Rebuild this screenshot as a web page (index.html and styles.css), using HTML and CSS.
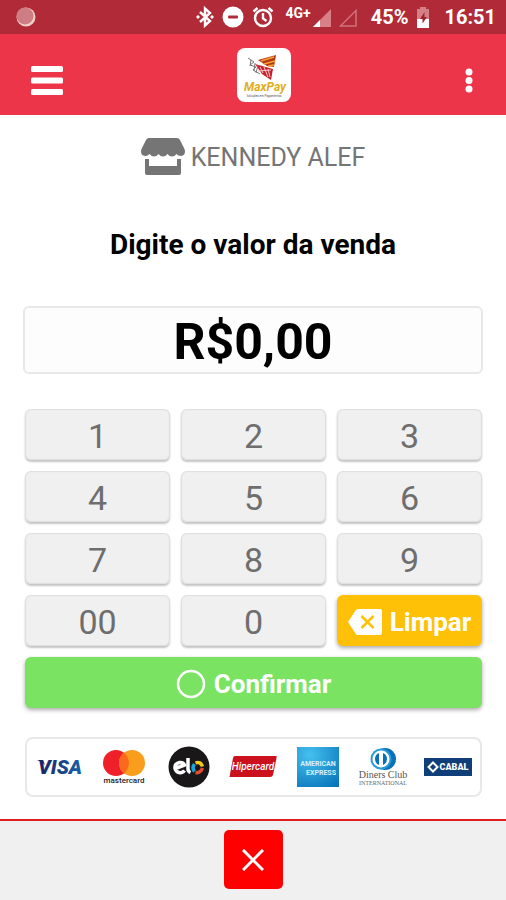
FILE: index.html
```html
<!DOCTYPE html>
<html lang="pt-BR">
<head>
  <meta charset="UTF-8">
  <meta name="viewport" content="width=device-width, initial-scale=1.0">
  <title>MaxPay</title>
  <link rel="stylesheet" href="styles.css">
</head>
<body>

  <!-- Status bar -->
  <div class="status-bar">
    <svg class="status-dot" width="20" height="20" viewBox="0 0 20 20">
      <circle cx="10" cy="10" r="9.5" fill="#f0cfc8"/>
      <circle cx="9" cy="9" r="8.5" fill="#cf7d85"/>
    </svg>
    <div class="status-icons">
      <svg width="18" height="22" viewBox="0 0 18 22" fill="none" stroke="#fff" stroke-width="2.4">
        <path d="M4 6l10 9-5 4.500V2.500L14 7l-10 9"/>
        <circle cx="2" cy="11" r="1.2" fill="#fff" stroke-width="1"/>
        <circle cx="16" cy="11" r="1.2" fill="#fff" stroke-width="1"/>
      </svg>
      <svg width="22" height="22" viewBox="0 0 22 22">
        <circle cx="11" cy="11" r="10.500" fill="#fff"/>
        <rect x="6" y="9.500" width="10" height="3" rx="1" fill="#b02a37"/>
      </svg>
      <svg width="22" height="22" viewBox="0 0 22 22" fill="none" stroke="#fff" stroke-width="2.4">
        <circle cx="11" cy="12" r="8"/>
        <path d="M11 7v5.500l3.500 2.500M1.500 5.500l4-3.500M20.500 5.500l-4-3.500"/>
      </svg>
      <span class="network">4G+</span>
      <svg class="signal" width="18" height="20" viewBox="0 0 18 20">
        <path d="M18 2v18H0z" fill="#d97f88"/>
        <path d="M7 13v7H0z" fill="#fff"/>
      </svg>
      <svg width="18" height="20" viewBox="0 0 18 20">
        <path d="M17 3.500v15.500H1.500z" fill="none" stroke="#d0727b" stroke-width="1.500"/>
      </svg>
      <span class="battery">45%</span>
      <svg width="14" height="22" viewBox="0 0 14 22">
        <path d="M4 1h6v2h3v10H1V3h3z" fill="#d58087"/>
        <path d="M1 13h12v9H1z" fill="#fff"/>
        <path d="M8.500 6L4 13h2.500v4.500L11 11H8.500z" fill="#9c2430"/>
      </svg>
      <span class="clock">16:51</span>
    </div>
  </div>

  <!-- Header -->
  <header class="navbar">
    <button class="nav-btn" type="button" aria-label="Menu">
      <svg width="32" height="30" viewBox="0 0 32 30" fill="#fff">
        <rect width="32" height="6" rx="1.500"/>
        <rect y="11.500" width="32" height="6" rx="1.500"/>
        <rect y="23" width="32" height="6" rx="1.500"/>
      </svg>
    </button>
    <div class="logo">
      <svg width="54" height="54" viewBox="0 0 54 54">
        <path d="M21 12l18-5-2 12-7-1z" fill="#b8341a"/>
        <path d="M24 13l13-4M27 16l11-3M31 18l6-1" stroke="#f4a631" stroke-width="1.500" fill="none"/>
        <path d="M18 16l18 5-2 11-9-6z" fill="#c5202d"/>
        <path d="M23 19l3 6M27 19l4 10M31 21l2 8M21 23l13-1" stroke="#f6c9c9" stroke-width="1" fill="none"/>
        <path d="M11 10l6 4-4 3 6 2-3 3 7 4M14 12l-1 6M18 15l-1 8M21 17l-2 8" stroke="#777" stroke-width="1" fill="none"/>
        <text class="logo-name" x="28" y="43">MaxPay</text>
        <text class="logo-tag" x="27" y="49">Soluções em Pagamentos</text>
      </svg>
    </div>
    <button class="nav-btn nav-more" type="button" aria-label="Mais opções">
      <svg width="8" height="26" viewBox="0 0 8 26" fill="#fff">
        <circle cx="4" cy="4" r="3.500"/>
        <circle cx="4" cy="12.500" r="3.500"/>
        <circle cx="4" cy="21" r="3.500"/>
      </svg>
    </button>
  </header>

  <!-- Sale -->
  <main class="container">
    <div class="store">
      <svg width="44" height="38" viewBox="0 0 44 38" fill="#757575">
        <path d="M8 0h28q2 0 3 2l4 8q1 1.500 1 3.500 0 4-4 4.500-3 0-4.500-2-2 2.500-4.500 2.500T26.500 16q-2 2.500-4.500 2.500T17.500 16q-2 2.500-4.500 2.500T8.500 16Q7 18 4 18q-4-.5-4-4.500Q0 11.500 1 10l4-8q1-2 3-2z"/>
        <path d="M4 21h4v7h28v-7h4v14q0 2-2 2H6q-2 0-2-2z"/>
      </svg>
      <span>KENNEDY ALEF</span>
    </div>

    <label class="title" for="amount">Digite o valor da venda</label>
    <input class="amount" type="text" id="amount" value="R$0,00" readonly>

    <div class="keypad">
      <button class="key" type="button">1</button>
      <button class="key" type="button">2</button>
      <button class="key" type="button">3</button>
      <button class="key" type="button">4</button>
      <button class="key" type="button">5</button>
      <button class="key" type="button">6</button>
      <button class="key" type="button">7</button>
      <button class="key" type="button">8</button>
      <button class="key" type="button">9</button>
      <button class="key" type="button">00</button>
      <button class="key" type="button">0</button>
      <button class="key key-clear" type="button">
        <svg width="34" height="26" viewBox="0 0 34 26">
          <path d="M10 0h22q2 0 2 2v22q0 2-2 2H10q-1.500 0-2.500-1.500L0 13 7.500 1.500Q8.500 0 10 0z" fill="#fff"/>
          <path d="M13.500 7l12 12M25.500 7l-12 12" stroke="#ffc107" stroke-width="2.500" fill="none"/>
        </svg>
        Limpar
      </button>
      <button class="key key-confirm" type="button">
        <svg width="30" height="30" viewBox="0 0 30 30">
          <circle cx="15" cy="15" r="13" fill="none" stroke="#fff" stroke-width="2.500"/>
        </svg>
        Confirmar
      </button>
    </div>

    <!-- Accepted cards -->
    <div class="brands">
      <svg width="54" height="20" viewBox="0 0 54 20">
        <defs>
          <linearGradient id="visaBlue" x2="1" y2="0">
            <stop offset="0" stop-color="#1b2062"/>
            <stop offset="1" stop-color="#1463a8"/>
          </linearGradient>
        </defs>
        <path d="M5 3h6l2 5Q10 4.500 5 3z" fill="#1b2062"/>
        <text class="visa" x="28" y="17" fill="url(#visaBlue)">VISA</text>
      </svg>
      <svg width="44" height="36" viewBox="0 0 44 36">
        <circle cx="14" cy="14" r="13" fill="#f0202b"/>
        <circle cx="30" cy="14" r="13" fill="#f99d1c"/>
        <path d="M22 3.800a13 13 0 0 1 0 20.400 13 13 0 0 1 0-20.400z" fill="#fb6a1c"/>
        <text class="mastercard" x="22" y="34">mastercard</text>
      </svg>
      <svg width="42" height="42" viewBox="0 0 42 42">
        <circle cx="21" cy="21" r="20.500" fill="#191717"/>
        <g fill="none" stroke-width="3.500">
          <path d="M7.500 22.500l9-3.500q-1.500-3-5-2.500-5 1-4.500 6 1.500 5 6.500 4 2-.5 3-2" stroke="#fff"/>
          <path d="M20 12v11q0 2.500 2.500 3.500" stroke="#fff"/>
          <path d="M26.500 25.500q-3-3.500 0-7.500" stroke="#18a5dc"/>
          <path d="M27.500 17q5-2 7 3.500" stroke="#f4c81d"/>
          <path d="M34.500 22q-2 5.500-7 4.500" stroke="#e84a2d"/>
        </g>
      </svg>
      <svg width="48" height="22" viewBox="0 0 48 22">
        <path d="M6 0h41q1 0 .7 1L44 19q-.5 2-3 2H.5L4 2Q4.400 0 6 0z" fill="#cb111b"/>
        <text class="hipercard" x="24" y="14">Hipercard</text>
      </svg>
      <svg width="42" height="40" viewBox="0 0 42 40">
        <defs>
          <radialGradient id="amexBlue" cx=".3" cy=".2" r="1">
            <stop offset="0" stop-color="#45c1ee"/>
            <stop offset="1" stop-color="#0873ba"/>
          </radialGradient>
        </defs>
        <rect width="42" height="40" fill="url(#amexBlue)"/>
        <text class="amex" x="21" y="19">AMERICAN</text>
        <text class="amex" x="24" y="28">EXPRESS</text>
      </svg>
      <svg width="50" height="38" viewBox="0 0 50 38">
        <circle cx="27" cy="11" r="11" fill="#0870b8"/>
        <circle cx="23" cy="11" r="10.500" fill="#2a9bd8"/>
        <circle cx="23" cy="11" r="8.500" fill="#fff"/>
        <path d="M21 5a6.500 6.500 0 0 0 0 12zM25 5a6.500 6.500 0 0 1 0 12z" fill="#0870b8"/>
        <text class="diners" x="25" y="30">Diners Club</text>
        <text class="diners-small" x="25" y="37">INTERNATIONAL</text>
      </svg>
      <svg width="48" height="18" viewBox="0 0 48 18">
        <rect width="48" height="18" fill="#0f3e78"/>
        <path d="M9 4.500l4.500 4.500L9 13.500 4.500 9z" fill="none" stroke="#fff" stroke-width="2"/>
        <text class="cabal" x="30" y="12">CABAL</text>
      </svg>
    </div>
  </main>

  <footer class="bottom-bar">
    <button class="close-btn" type="button" aria-label="Fechar">
      <svg width="22" height="22" viewBox="0 0 22 22">
        <path d="M1 1l20 20M21 1L1 21" stroke="#fff" stroke-width="3" fill="none"/>
      </svg>
    </button>
  </footer>

</body>
</html>
```

FILE: styles.css
```css
* {
  box-sizing: border-box;
}

body {
  font-family: Roboto, Arial, sans-serif;
  background-color: white;
  color: black;
  margin: 0;
  min-height: 100vh;
  display: flex;
  flex-direction: column;
}

svg {
  display: block;
  flex: none;
}

button {
  font-family: inherit;
  border: none;
  cursor: pointer;
}

.status-bar {
  height: 34px;
  padding: 0 10px 0 16px;
  background-color: #b02a37;
  color: white;
  display: flex;
  align-items: center;
  justify-content: space-between;
}

.status-icons {
  display: flex;
  align-items: center;
  gap: 8px;
}

.network {
  font-size: 14px;
  font-weight: 700;
  padding: 0 2px 8px 4px;
}

.signal {
  margin-left: -8px;
}

.battery,
.clock {
  margin-left: 6px;
  font-size: 20px;
  font-weight: 700;
}

.navbar {
  height: 81px;
  padding: 0 28px;
  background-color: #ed3549;
  display: flex;
  align-items: center;
  justify-content: space-between;
}

.nav-btn {
  display: flex;
  padding: 12px 3px 0;
  background: none;
}

.nav-more {
  padding-right: 5px;
}

.logo {
  background-color: white;
  border-radius: 8px;
}

.logo-name {
  font-size: 12px;
  font-weight: 700;
  font-style: italic;
  text-anchor: middle;
  fill: #dfae1f;
}

.logo-tag {
  font-size: 3px;
  text-anchor: middle;
  fill: #555;
}

.container {
  flex: 1;
  padding: 22px 23px;
  display: flex;
  flex-direction: column;
}

.store {
  display: flex;
  align-items: center;
  justify-content: center;
  gap: 6px;
  height: 40px;
  font-size: 25px;
  color: #757575;
}

.title {
  margin-top: 50px;
  font-size: 28px;
  line-height: 36px;
  font-weight: 700;
  text-align: center;
}

.amount {
  width: 100%;
  height: 68px;
  margin-top: 43px;
  padding: 4px 0 0;
  border: 2px solid #e8e8e8;
  border-radius: 6px;
  background-color: #fdfdfd;
  font-family: inherit;
  font-size: 50px;
  font-weight: 700;
  color: black;
  text-align: center;
}

.keypad {
  display: grid;
  grid-template-columns: repeat(3, 1fr);
  gap: 11px;
  margin-top: 35px;
  padding: 0 1px 0 2px;
}

.key {
  display: flex;
  align-items: center;
  justify-content: center;
  height: 51px;
  padding: 2px 0 0;
  border-radius: 6px;
  background-color: #f0f0f0;
  box-shadow: inset 0 0 1px 1px #dedede, 0 2px 2px #c4c4c4;
  font-size: 34px;
  color: #6e6e6e;
}

.key-clear,
.key-confirm {
  gap: 8px;
  font-size: 26px;
  font-weight: 700;
  color: white;
  box-shadow: 0 2px 4px #aaaaaa;
}

.key-clear {
  background-color: #ffc107;
}

.key-confirm {
  grid-column: 1 / -1;
  background-color: #7ae362;
}

.brands {
  display: grid;
  grid-template-columns: repeat(7, 1fr);
  align-items: center;
  justify-items: center;
  height: 60px;
  margin: 29px 1px 0 2px;
  border: 2px solid #e8e8e8;
  border-radius: 8px;
}

.brands text {
  text-anchor: middle;
}

.visa {
  font-size: 20px;
  font-weight: 900;
  font-style: italic;
}

.mastercard {
  font-size: 8px;
  font-weight: 500;
  fill: #222;
}

.hipercard {
  font-size: 10px;
  font-style: italic;
  font-weight: 500;
  fill: white;
}

.amex {
  font-size: 7px;
  font-weight: 700;
  fill: #d6f0fb;
}

.diners {
  font-family: "Liberation Serif", serif;
  font-size: 10px;
  fill: #555;
}

.diners-small {
  font-family: "Liberation Serif", serif;
  font-size: 6px;
  fill: #666;
}

.cabal {
  font-size: 9px;
  font-weight: 900;
  fill: white;
}

.bottom-bar {
  display: flex;
  justify-content: center;
  padding: 9px 0 11px;
  border-top: 2px solid #e01b1b;
  background-color: #f0f0f0;
}

.close-btn {
  display: flex;
  align-items: center;
  justify-content: center;
  width: 59px;
  height: 59px;
  border-radius: 5px;
  background-color: #ff0000;
}
```
